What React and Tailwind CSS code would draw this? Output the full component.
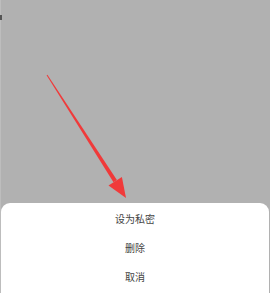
export default function App() {
  return (
    <div
      className="relative flex h-[293px] w-[270px] flex-col overflow-hidden bg-[#b1b1b1]"
      style={{ fontFamily: '"Noto Sans CJK SC", "Noto Sans", sans-serif' }}
    >
      <div className="absolute left-0 top-0 h-full w-px bg-[#bdbdbd]" />
      <div className="absolute left-0 top-[15px] h-[5px] w-[2px] bg-[#555]" />
      <div className="flex-1" />
      <div className="mx-px flex flex-col rounded-t-[9px] bg-white pt-[1px] pb-[2px] text-[10px] text-[#444]">
        <div className="flex h-[29px] items-center justify-center">设为私密</div>
        <div className="flex h-[29px] items-center justify-center">删除</div>
        <div className="flex h-[29px] items-center justify-center">取消</div>
      </div>
      <svg className="absolute left-0 top-0" width="270" height="293" viewBox="0 0 270 293">
        <polygon
          points="46.6,75.3 47.4,74.7 116.9,180.1 113.5,182.3"
          fill="#f03a3a"
        />
        <polygon points="126,198 108.5,185.5 121.9,176.9" fill="#f03a3a" />
      </svg>
    </div>
  );
}
